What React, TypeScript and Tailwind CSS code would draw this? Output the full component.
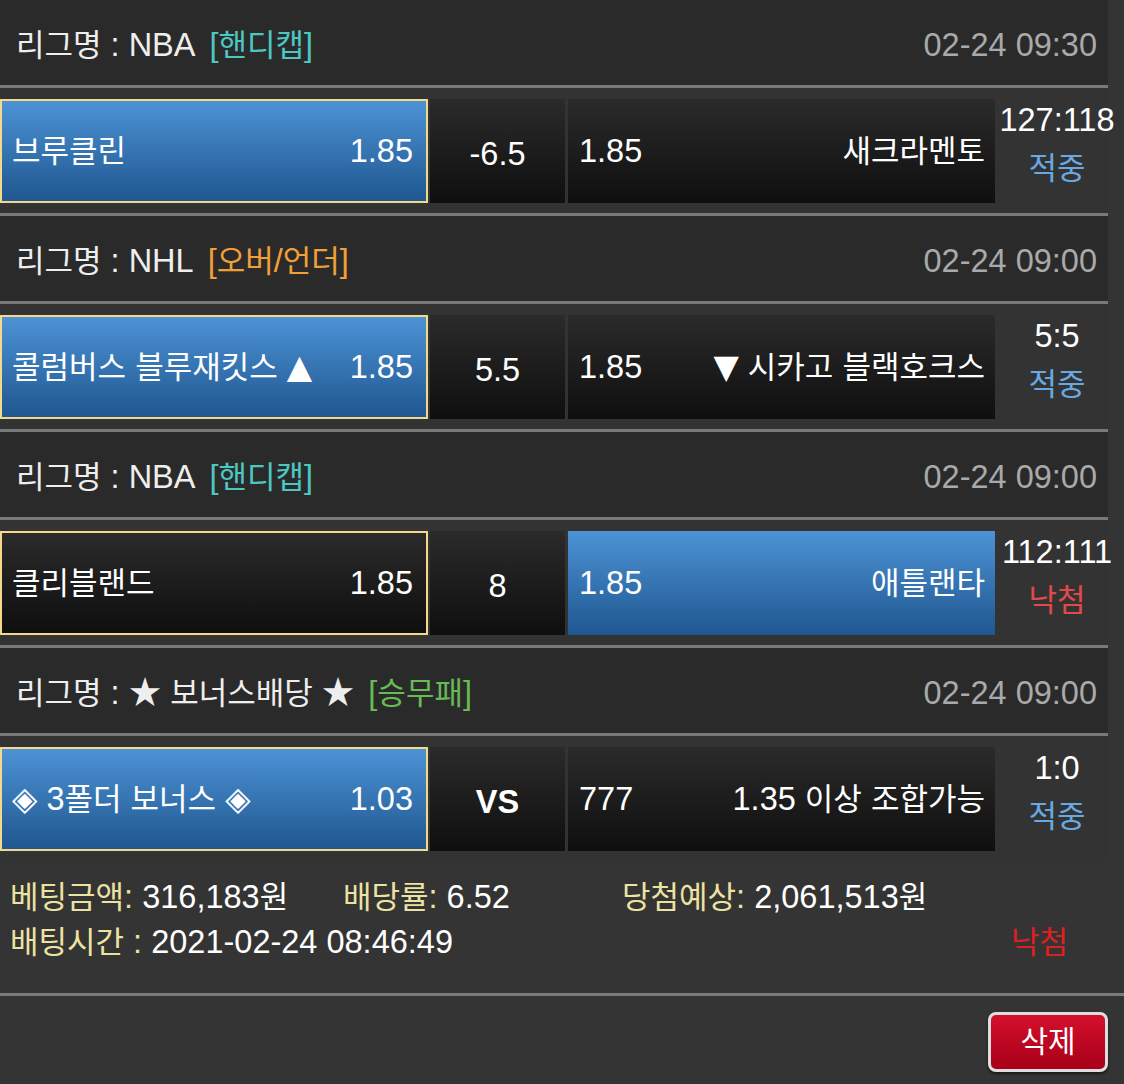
import React from 'react'

interface Game {
  league: string
  type: string
  typeColor: string
  date: string
  home: string
  homeOdds: string
  homeBlue: boolean
  line: string
  lineBold?: boolean
  awayOdds: string
  away: string
  awayBlue: boolean
  score: string
  result: '적중' | '낙첨'
}

const GAMES: Game[] = [
  {
    league: 'NBA', type: '[핸디캡]', typeColor: 'text-[#4cc7c2]', date: '02-24 09:30',
    home: '브루클린', homeOdds: '1.85', homeBlue: true, line: '-6.5',
    awayOdds: '1.85', away: '새크라멘토', awayBlue: false, score: '127:118', result: '적중',
  },
  {
    league: 'NHL', type: '[오버/언더]', typeColor: 'text-[#f0a038]', date: '02-24 09:00',
    home: '콜럼버스 블루재킷스 ▲', homeOdds: '1.85', homeBlue: true, line: '5.5',
    awayOdds: '1.85', away: '▼ 시카고 블랙호크스', awayBlue: false, score: '5:5', result: '적중',
  },
  {
    league: 'NBA', type: '[핸디캡]', typeColor: 'text-[#4cc7c2]', date: '02-24 09:00',
    home: '클리블랜드', homeOdds: '1.85', homeBlue: false, line: '8',
    awayOdds: '1.85', away: '애틀랜타', awayBlue: true, score: '112:111', result: '낙첨',
  },
  {
    league: '★ 보너스배당 ★', type: '[승무패]', typeColor: 'text-[#66bb55]', date: '02-24 09:00',
    home: '◈ 3폴더 보너스 ◈', homeOdds: '1.03', homeBlue: true, line: 'VS', lineBold: true,
    awayOdds: '777', away: '1.35 이상 조합가능', awayBlue: false, score: '1:0', result: '적중',
  },
]

const BLUE = 'bg-gradient-to-b from-[#4d93d6] to-[#1f5790]'
const DARK = 'bg-gradient-to-b from-[#2b2b2b] to-[#0f0f0f]'

// hangul runs render a touch smaller than the latin/digit runs; arrows/diamonds come from DejaVu
function T({ children }: { children: string }) {
  const parts = children.split(/([\uAC00-\uD7A3]+|[▲▼◈])/)
  return (
    <>
      {parts.map((p, i) => {
        if (/[\uAC00-\uD7A3]/.test(p)) return <span key={i} className="text-[31px]">{p}</span>
        if (/[▲▼◈]/.test(p)) return <span key={i} className="font-['DejaVu_Sans'] text-[33px]">{p}</span>
        return <span key={i}>{p}</span>
      })}
    </>
  )
}

function Separator() {
  return <div className="h-[3px] bg-[#7a7a7a]" />
}

function GameBlock({ g, last }: { g: Game; last: boolean }) {
  return (
    <div>
      {/* League header */}
      <div className="h-[85px] pt-[5px] bg-[#2a2a2a] flex items-center justify-between pl-[16px] pr-[11px]">
        <div className="text-[#eeeeee]">
          <T>{`리그명 : ${g.league}`}</T>
          <span className={`ml-[14px] ${g.typeColor}`}><T>{g.type}</T></span>
        </div>
        <div className="text-[#a9a9a9]">{g.date}</div>
      </div>
      <Separator />

      {/* Bet row */}
      <div className="flex pt-[11px] pb-[10px] bg-[#333333]">
        <div
          className={`shrink-0 w-[428px] h-[104px] border-2 border-[#f3d98c] flex items-center justify-between pl-[10px] pr-[13px] text-white ${
            g.homeBlue ? BLUE : DARK
          }`}
        >
          <span><T>{g.home}</T></span>
          <span>{g.homeOdds}</span>
        </div>
        <div
          className={`shrink-0 ml-[2px] w-[135px] h-[104px] flex items-center justify-center pt-[6px] text-white ${DARK} ${
            g.lineBold ? 'font-bold' : ''
          }`}
        >
          {g.line}
        </div>
        <div
          className={`shrink-0 ml-[3px] w-[427px] h-[104px] flex items-center justify-between pl-[11px] pr-[10px] text-white ${
            g.awayBlue ? BLUE : DARK
          }`}
        >
          <span>{g.awayOdds}</span>
          <span><T>{g.away}</T></span>
        </div>
        <div className="shrink-0 w-[124px] h-[104px] -mt-[2px] flex flex-col items-center leading-[46px] whitespace-nowrap">
          <span className="text-white">{g.score}</span>
          <span className={`mt-[3px] text-[31px] ${g.result === '적중' ? 'text-[#69a9e2]' : 'text-[#e04a4a]'}`}>{g.result}</span>
        </div>
      </div>
      {!last && <Separator />}
    </div>
  )
}

export default function App() {
  return (
    <div
      className="w-[1124px] h-[1084px] bg-[#343434] overflow-hidden text-[32.5px] leading-none"
      style={{ fontFamily: '"Liberation Sans", "Noto Sans CJK KR", sans-serif' }}
    >
      <div className="w-[1108px]">
        {GAMES.map((g, i) => (
          <GameBlock key={i} g={g} last={i === GAMES.length - 1} />
        ))}
      </div>

      {/* Summary */}
      <div className="pt-[14px] pb-[28px] pl-[10px] leading-[45px] text-white">
        <div className="flex">
          <div className="w-[333px]">
            <span className="text-[#ece2a2]"><T>베팅금액:</T></span> <T>316,183원</T>
          </div>
          <div className="w-[279px]">
            <span className="text-[#ece2a2]"><T>배당률:</T></span> 6.52
          </div>
          <div>
            <span className="text-[#ece2a2]"><T>당첨예상:</T></span> <T>2,061,513원</T>
          </div>
        </div>
        <div className="flex justify-between pr-[56px]">
          <div>
            <span className="text-[#ece2a2]"><T>배팅시간 :</T></span> 2021-02-24 08:46:49
          </div>
          <div className="text-[#dc2020] text-[31px]">낙첨</div>
        </div>
      </div>
      <Separator />

      <div className="flex justify-end pr-[16px] pt-[16px]">
        <button className="w-[120px] h-[60px] rounded-[8px] border-[3px] border-[#dedede] bg-gradient-to-b from-[#d4102c] to-[#a8001a] text-white text-[30px] shadow-[0_2px_3px_rgba(0,0,0,0.5)]">
          삭제
        </button>
      </div>
    </div>
  )
}
